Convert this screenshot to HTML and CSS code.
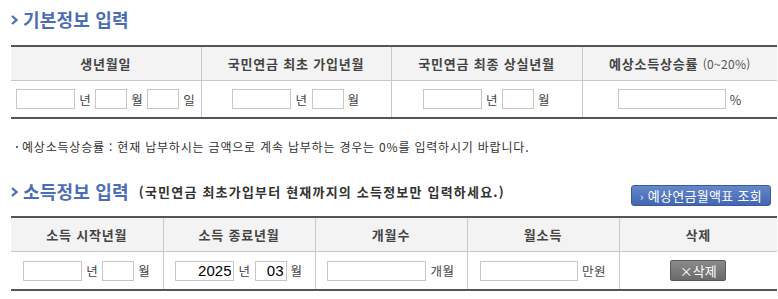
FILE: index.html
```html
<!DOCTYPE html>
<html lang="ko">
<head>
<meta charset="utf-8">
<link rel="stylesheet" href="styles.css">
</head>
<body>
<div class="page">
  <h2 class="sec-title"><span class="chev"><svg width="7" height="10" viewBox="0 0 7 10"><path d="M1 1 L5.5 5 L1 9" fill="none" stroke="#4a6db5" stroke-width="2.2"/></svg></span>기본정보 입력</h2>

  <table class="grid grid-basic">
    <colgroup><col style="width:190px"><col style="width:190px"><col style="width:191px"><col></colgroup>
    <thead>
      <tr><th>생년월일</th><th>국민연금 최초 가입년월</th><th>국민연금 최종 상실년월</th><th>예상소득상승률 <span class="light">(0~20%)</span></th></tr>
    </thead>
    <tbody>
      <tr>
        <td><input class="w59" type="text"><span class="unit">년</span><input class="w32" type="text"><span class="unit">월</span><input class="w32" type="text"><span class="unit">일</span></td>
        <td><input class="w59" type="text"><span class="unit">년</span><input class="w32" type="text"><span class="unit">월</span></td>
        <td><input class="w59" type="text"><span class="unit">년</span><input class="w32" type="text"><span class="unit">월</span></td>
        <td><input class="w108" type="text"><span class="unit">%</span></td>
      </tr>
    </tbody>
  </table>

  <p class="note"><span class="dot"></span>예상소득상승률 : 현재 납부하시는 금액으로 계속 납부하는 경우는 0%를 입력하시기 바랍니다.</p>

  <div class="sec-head">
    <h2 class="sec-title"><span class="chev"><svg width="7" height="10" viewBox="0 0 7 10"><path d="M1 1 L5.5 5 L1 9" fill="none" stroke="#4a6db5" stroke-width="2.2"/></svg></span>소득정보 입력<span class="sub">(국민연금 최초가입부터 현재까지의 소득정보만 입력하세요.)</span></h2>
    <button class="btn-blue" type="button"><span class="arr">›</span> 예상연금월액표 조회</button>
  </div>

  <table class="grid grid-income">
    <colgroup><col style="width:152px"><col style="width:152px"><col style="width:152px"><col style="width:152px"><col></colgroup>
    <thead>
      <tr><th>소득 시작년월</th><th>소득 종료년월</th><th>개월수</th><th>월소득</th><th>삭제</th></tr>
    </thead>
    <tbody>
      <tr>
        <td><input class="w59" type="text"><span class="unit">년</span><input class="w32" type="text"><span class="unit">월</span></td>
        <td><input class="w59 num" type="text" value="2025"><span class="unit">년</span><input class="w32 num" type="text" value="03"><span class="unit">월</span></td>
        <td><input class="w99" type="text"><span class="unit">개월</span></td>
        <td><input class="w98" type="text"><span class="unit">만원</span></td>
        <td><button class="btn-del" type="button">×삭제</button></td>
      </tr>
    </tbody>
  </table>
</div>
</body>
</html>
```

FILE: styles.css
```css
html, body {
  margin: 0;
  padding: 0;
  background: #fff;
}
body {
  font-family: "Noto Sans CJK KR", "Liberation Sans", sans-serif;
  font-size: 12px;
  color: #333;
  letter-spacing: 0.8px;
}
.page {
  padding: 8px 1px 0 11px;
  width: 766px;
}
.sec-title {
  display: flex;
  align-items: center;
  flex-shrink: 0;
  margin: 0;
  height: 22px;
  font-size: 18px;
  font-weight: bold;
  color: #4a6db5;
  letter-spacing: 0.2px;
  line-height: 22px;
  white-space: nowrap;
}
.chev {
  display: inline-flex;
  width: 12px;
  align-items: center;
}
.chev svg { display: block; margin-top: 2px; }
.sub {
  font-size: 13px;
  color: #333;
  margin-left: 10px;
  letter-spacing: 1.2px;
  margin-top: 1px;
}
.grid {
  width: 766px;
  border-collapse: collapse;
  table-layout: fixed;
  border-top: 2px solid #555;
  border-bottom: 2px solid #555;
}
.grid-basic { margin-top: 15px; }
.grid th {
  background: #f3f3f3;
  height: 33px;
  padding: 0;
  font-size: 13px;
  font-weight: bold;
  color: #444;
  border-bottom: 1px solid #c8c8c8;
  border-left: 1px solid #c8c8c8;
  text-align: center;
}
.grid td {
  height: 36px;
  padding: 0;
  border-left: 1px solid #c8c8c8;
  text-align: center;
  white-space: nowrap;
}
.grid th:first-child, .grid td:first-child { border-left: none; }
.light { font-weight: normal; color: #555; font-size: 12px; letter-spacing: 0.3px; }
input {
  box-sizing: border-box;
  height: 20px;
  border: 1px solid #c6c6c6;
  margin: 0;
  padding: 0 2px;
  vertical-align: middle;
  font-family: "Liberation Sans", sans-serif;
  font-size: 15px;
  letter-spacing: 0;
  color: #000;
  background: #fff;
}
.num { text-align: right; }
.w59 { width: 59px; }
.w32 { width: 32px; }
.w108 { width: 108px; }
.w99 { width: 99px; }
.w98 { width: 98px; }
.unit {
  display: inline-block;
  vertical-align: middle;
  margin: 0 4px 0 4px;
  font-size: 12.5px;
  letter-spacing: 0.5px;
  color: #444;
}
.unit:last-child { margin-right: 0; }
.note {
  margin: 21px 0 0 5px;
  height: 14px;
  line-height: 14px;
  font-size: 12px;
  color: #333;
  display: flex;
  align-items: center;
}
.dot {
  display: inline-block;
  width: 2px;
  height: 2px;
  background: #4a6db5;
  margin-right: 4px;
}
.sec-head {
  display: flex;
  align-items: flex-start;
  justify-content: space-between;
  margin-top: 26px;
  padding-right: 6px;
}
.btn-blue {
  box-sizing: border-box;
  flex-shrink: 0;
  width: 140px;
  height: 21px;
  margin-top: 5px;
  padding: 0;
  border: 1px solid #3a5a9c;
  border-radius: 3px;
  background: linear-gradient(#6487cc, #4266b0);
  color: #fff;
  font-family: "Noto Sans CJK KR", sans-serif;
  font-size: 13px;
  letter-spacing: 0.3px;
  line-height: 18px;
}
.btn-blue .arr { font-size: 11px; }
.grid-income { margin-top: 10px; }
.grid-income td { height: 37px; }
.btn-del {
  box-sizing: border-box;
  width: 56px;
  height: 21px;
  padding: 0;
  border: 1px solid #5a5a5a;
  border-radius: 2px;
  background: linear-gradient(#8a8a8a, #6a6a6a);
  color: #fff;
  font-family: "Noto Sans CJK KR", sans-serif;
  font-size: 13px;
  letter-spacing: 0;
  line-height: 18px;
  vertical-align: middle;
}
```
